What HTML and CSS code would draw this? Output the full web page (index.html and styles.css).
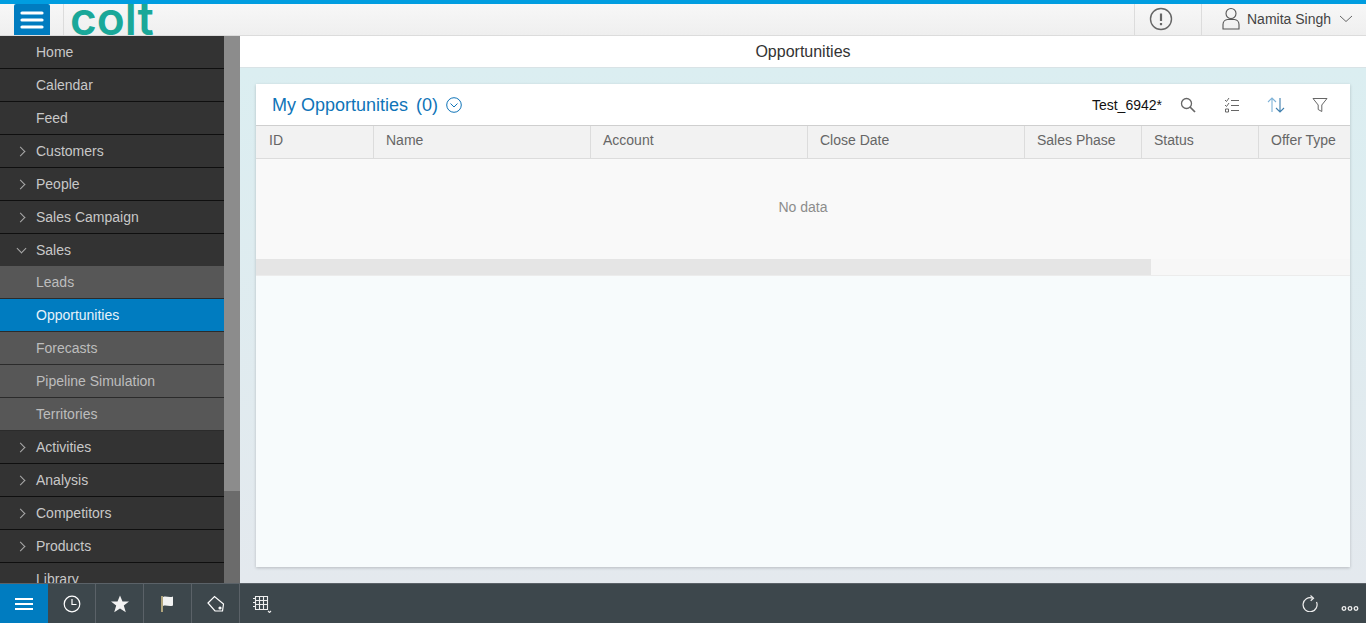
FILE: index.html
```html
<!DOCTYPE html>
<html lang="en">
<head>
    <meta charset="UTF-8">
    <title>Opportunities</title>
    <link rel="stylesheet" href="styles.css">
</head>
<body>
    <header class="topbar">
        <div class="menu-btn">
            <svg width="24" height="20" viewBox="0 0 24 20"><path d="M2 3h20M2 10h20M2 17h20" stroke="#fff" stroke-width="3.200" stroke-linecap="round"/></svg>
        </div>
        <div class="logo"><span>colt</span></div>
        <div class="top-right">
            <div class="alert">
                <svg width="24" height="24" viewBox="0 0 24 24" fill="none" stroke="#666"><circle cx="12" cy="12" r="10.500" stroke-width="1.400"/><path d="M12 6.500v7.500" stroke-width="2.200"/><path d="M12 16v2.200" stroke-width="2.200"/></svg>
            </div>
            <div class="user">
                <svg width="18" height="23" viewBox="0 0 18 23" fill="none" stroke="#555" stroke-width="1.100"><circle cx="9" cy="6.500" r="5"/><path d="M1 22v-4.500c0-3 2.500-4.800 4.500-5h7c2 .2 4.500 2 4.500 5V22z"/></svg>
                <span>Namita Singh</span>
                <svg width="14" height="8" viewBox="0 0 14 8" fill="none" stroke="#666" stroke-width="1"><path d="M1 1l6 5.500 6-5.500"/></svg>
            </div>
        </div>
    </header>

    <div class="middle">
        <nav class="sidebar">
            <ul class="nav-list">
                <li class="nav-item">Home</li>
                <li class="nav-item">Calendar</li>
                <li class="nav-item">Feed</li>
                <li class="nav-item has-arrow">Customers</li>
                <li class="nav-item has-arrow">People</li>
                <li class="nav-item has-arrow">Sales Campaign</li>
                <li class="nav-item has-arrow open">Sales</li>
                <li class="nav-item sub">Leads</li>
                <li class="nav-item sub active">Opportunities</li>
                <li class="nav-item sub">Forecasts</li>
                <li class="nav-item sub">Pipeline Simulation</li>
                <li class="nav-item sub">Territories</li>
                <li class="nav-item has-arrow">Activities</li>
                <li class="nav-item has-arrow">Analysis</li>
                <li class="nav-item has-arrow">Competitors</li>
                <li class="nav-item has-arrow">Products</li>
                <li class="nav-item">Library</li>
            </ul>
            <div class="side-scroll"><div class="side-thumb"></div></div>
        </nav>

        <main class="content">
            <div class="page-title">Opportunities</div>
            <div class="page-body">
                <section class="card">
                    <div class="card-head">
                        <h2 class="card-title">My Opportunities<span class="count">(0)</span></h2>
                        <svg class="title-icon" width="16" height="16" viewBox="0 0 16 16" fill="none" stroke="#0f74b8" stroke-width="1"><circle cx="8" cy="8" r="7.300"/><path d="M4.500 6.500L8 10l3.500-3.500"/></svg>
                        <div class="tools">
                            <span class="filter-name">Test_6942*</span>
                            <svg class="search-icon" width="16" height="16" viewBox="0 0 16 16" fill="none" stroke="#666" stroke-width="1.300"><circle cx="6.500" cy="6.500" r="5"/><path d="M10 10l5 5" stroke-width="1.700"/></svg>
                            <svg width="16" height="16" viewBox="0 0 16 16" fill="none" stroke="#666" stroke-width="1"><path d="M1 3l1.500 1.500L5 1M7 3.500h8M1 8l1.500 1.500L5 6M7 8.500h8M7 13.500h8M1.500 12h3v3h-3z"/></svg>
                            <svg width="18" height="16" viewBox="0 0 18 16" fill="none" stroke-width="1.100"><path d="M5 15V1.500M1 5l4-4 4 4" stroke="#7fb3d8"/><path d="M13 1v13.500M9 11l4 4 4-4" stroke="#3f7fae"/></svg>
                            <svg width="16" height="16" viewBox="0 0 16 16" fill="none" stroke="#666" stroke-width="1"><path d="M1 1.500h14L9.800 8v6.500l-3.600-2V8z"/></svg>
                        </div>
                    </div>
                    <div class="table-head">
                        <div class="col col-id">ID</div>
                        <div class="col col-wide">Name</div>
                        <div class="col col-wide">Account</div>
                        <div class="col col-wide">Close Date</div>
                        <div class="col col-mid">Sales Phase</div>
                        <div class="col col-mid">Status</div>
                        <div class="col col-last">Offer Type</div>
                    </div>
                    <div class="no-data">No data</div>
                    <div class="h-scroll"><div class="h-thumb"></div></div>
                </section>
            </div>
        </main>
    </div>

    <footer class="bottombar">
        <div class="foot-btn first">
            <svg width="18" height="14" viewBox="0 0 18 14"><path d="M0 2h18M0 7h18M0 12h18" stroke="#fff" stroke-width="2"/></svg>
        </div>
        <div class="foot-btn">
            <svg width="18" height="18" viewBox="0 0 18 18" fill="none" stroke="#fff" stroke-width="1.200"><circle cx="9" cy="9" r="7.800"/><path d="M9 4v5.500h4.500"/></svg>
        </div>
        <div class="foot-btn">
            <svg width="18" height="18" viewBox="0 0 18 18"><path d="M9 .5l2.500 6h6.500l-5.200 4 2 6.800L9 13.400l-5.800 3.900 2-6.800L0 6.500h6.500z" fill="#f2f2f2"/></svg>
        </div>
        <div class="foot-btn">
            <svg width="16" height="18" viewBox="0 0 16 18"><path d="M2 1v16" stroke="#d9c48c" stroke-width="1.500"/><path d="M3 2c3-1.500 6 1 10-.5v9c-4 1.500-7-1-10 .5z" fill="#f2f2f2"/></svg>
        </div>
        <div class="foot-btn">
            <svg width="18" height="18" viewBox="0 0 18 18" fill="none" stroke="#fff" stroke-width="1.200"><path d="M1 8l6.500-6.500L16.500 9l-1 7H8z"/><circle cx="13" cy="13" r="1" fill="#fff"/></svg>
        </div>
        <div class="foot-btn last">
            <svg width="20" height="18" viewBox="0 0 20 18" fill="none" stroke="#eee" stroke-width="1.100"><path d="M3.500 1.500h12v13h-12zM3.500 5.500h12M3.500 9.500h12M7.500 1.500v13M11.500 1.500v13M1 3.500h3M1 7.500h3M1 11.500h3M16 16l1.500 1.500L19 16"/></svg>
        </div>
        <div class="foot-right">
            <svg width="16" height="17" viewBox="0 0 16 17" fill="none" stroke="#eee" stroke-width="1.200"><path d="M10.500 3.200A7 7 0 1 0 14.500 7"/><path d="M8.500 .5l3 2.700-2.800 2.500"/></svg>
            <svg class="dots" width="18" height="5" viewBox="0 0 18 5" fill="none" stroke="#eee" stroke-width="1.300"><circle cx="3" cy="2.500" r="1.800"/><circle cx="9" cy="2.500" r="1.800"/><circle cx="15" cy="2.500" r="1.800"/></svg>
        </div>
    </footer>
</body>
</html>
```

FILE: styles.css
```css
* {
    box-sizing: border-box;
}

html, body {
    height: 100%;
}

body {
    margin: 0;
    overflow: hidden;
    display: flex;
    flex-direction: column;
    font-family: "Liberation Sans", Arial, sans-serif;
    font-size: 14px;
    color: #333;
}

/* top bar */
.topbar {
    height: 36px;
    flex: none;
    display: flex;
    border-top: 4px solid #009de0;
    border-bottom: 1px solid #dcdcdc;
    background: linear-gradient(to bottom, #f7f7f7, #efefef);
}

.menu-btn {
    width: 36px;
    height: 31px;
    margin-left: 14px;
    display: flex;
    align-items: center;
    justify-content: center;
    background: #007cc0;
    border-radius: 2px 2px 0 0;
}

.logo {
    width: 92px;
    height: 31px;
    margin-left: 13px;
    padding-left: 6px;
    border-left: 1px solid #dcdcdc;
    overflow: hidden;
}

.logo span {
    display: block;
    margin-top: -9px;
    font-family: Inter, sans-serif;
    font-size: 46px;
    line-height: 46px;
    font-weight: 600;
    color: #1aa899;
}

.top-right {
    margin-left: auto;
    display: flex;
}

.alert {
    width: 68px;
    padding: 0 0 2px 14px;
    display: flex;
    align-items: center;
    border-left: 1px solid #dcdcdc;
    border-right: 1px solid #dcdcdc;
}

.user {
    width: 164px;
    display: flex;
    align-items: center;
    padding-left: 20px;
    padding-bottom: 2px;
    color: #444;
}

.user span {
    margin-left: 7px;
    margin-right: 8px;
}

/* side navigation */
.middle {
    flex: 1;
    min-height: 0;
    display: flex;
}

.sidebar {
    width: 240px;
    flex: none;
    display: flex;
    overflow: hidden;
}

.nav-list {
    width: 224px;
    margin: 0;
    padding: 0;
    list-style: none;
    background: #333;
}

.nav-item {
    height: 33px;
    padding-left: 36px;
    line-height: 32px;
    color: #c8c8c8;
    background: #333;
    border-bottom: 1px solid #0f0f0f;
    position: relative;
}

.nav-item.open {
    height: 32px;
    border-bottom: 0;
}

.nav-item.sub {
    background: #575757;
    color: #bdbdbd;
    border-bottom-color: #2b2b2b;
}

.nav-item.active {
    background: #007cc0;
    color: #e6f2fa;
}

.has-arrow::before {
    content: "";
    position: absolute;
    left: 17px;
    top: 13px;
    width: 6px;
    height: 6px;
    border-top: 1px solid #aaa;
    border-right: 1px solid #aaa;
    transform: rotate(45deg);
}

.has-arrow.open::before {
    left: 18px;
    top: 11px;
    transform: rotate(135deg);
}

.side-scroll {
    width: 16px;
    background: #6b6b6b;
}

.side-thumb {
    height: 455px;
    background: #8c8c8c;
}

/* main area */
.content {
    flex: 1;
    min-width: 0;
    display: flex;
    flex-direction: column;
}

.page-title {
    height: 32px;
    flex: none;
    text-align: center;
    line-height: 31px;
    font-size: 16px;
    color: #333;
    background: #fff;
    border-bottom: 1px solid #d9e3e6;
}

.page-body {
    flex: 1;
    padding: 16px;
    background: linear-gradient(to bottom, #dbeef1, #e4e9ee);
}

.card {
    height: 100%;
    background: #f7fbfc;
    box-shadow: 0 1px 3px rgba(0, 0, 0, 0.2);
}

.card-head {
    height: 42px;
    display: flex;
    align-items: center;
    padding-left: 16px;
    padding-right: 22px;
    background: #fff;
    border-bottom: 1px solid #cfcfcf;
}

.card-title {
    margin: 0;
    padding-top: 1px;
    font-size: 18px;
    font-weight: 400;
    color: #0f74b8;
}

.count {
    margin-left: 8px;
}

.title-icon {
    margin-left: 8px;
}

.tools {
    margin-left: auto;
    display: flex;
    align-items: center;
}

.filter-name {
    color: #111;
    margin-right: 18px;
}

.tools svg {
    margin-right: 27px;
}

.tools .search-icon {
    margin-right: 28px;
}

.tools svg:last-child {
    margin-right: 0;
}

.table-head {
    height: 33px;
    display: flex;
    background: #f2f2f2;
    border-bottom: 1px solid #dcdcdc;
    overflow: hidden;
}

.col {
    flex: none;
    padding-left: 12px;
    line-height: 29px;
    color: #666;
    border-right: 1px solid #dcdcdc;
}

.col-id {
    width: 118px;
    padding-left: 13px;
}

.col-wide {
    width: 217px;
}

.col-mid {
    width: 117px;
}

.col-last {
    width: 92px;
    border-right: 0;
}

.no-data {
    height: 100px;
    text-align: center;
    line-height: 96px;
    color: #8c8c8c;
    background: #f9f9f9;
}

.h-scroll {
    height: 17px;
    background: #f7f7f7;
    border-bottom: 1px solid #ececec;
}

.h-thumb {
    width: 895px;
    height: 16px;
    background: #e5e5e5;
}

/* bottom bar */
.bottombar {
    height: 40px;
    flex: none;
    display: flex;
    background: #3d474c;
    border-top: 1px solid #5b6268;
}

.foot-btn {
    width: 48px;
    display: flex;
    align-items: center;
    justify-content: center;
    border-right: 1px solid #5b6268;
}

.foot-btn.first {
    background: #007cc0;
    border-right: 0;
}

.foot-btn.last {
    border-right: 0;
    width: 44px;
}

.foot-right {
    margin-left: auto;
    display: flex;
    align-items: center;
    padding-right: 7px;
}

.dots {
    margin-left: 23px;
    margin-top: 10px;
}
```
